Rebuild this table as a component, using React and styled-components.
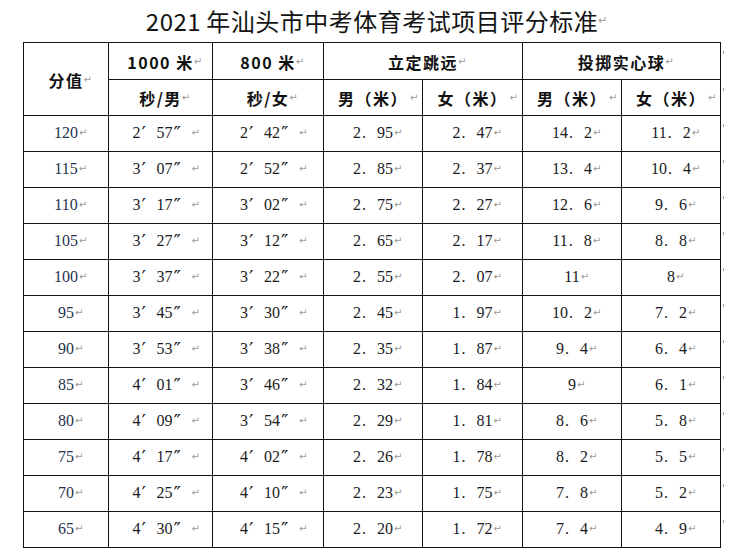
import React from "react";
import styled, { createGlobalStyle } from "styled-components";

const Global = createGlobalStyle`
  html, body { margin: 0; padding: 0; background: #fff; }
  body { font-family: "Noto Sans CJK SC", "Noto Sans", sans-serif; color: #111; }
`;

const Page = styled.div`
  width: 744px;
  height: 548px;
  overflow: hidden;
  display: flex;
  flex-direction: column;
`;

const Title = styled.h1`
  margin: 0;
  height: 44px;
  display: flex;
  align-items: center;
  justify-content: center;
  font-family: "Noto Sans CJK SC", sans-serif;
  font-weight: 400;
  font-size: 24px;
  line-height: 24px;
  letter-spacing: 0.5px;
  color: #141414;
  white-space: nowrap;
`;

const Year = styled.span`
  margin-right: 5px;
`;

const Mark = styled.span`
  display: inline-block;
  width: ${(p) => p.$w || 9}px;
  margin-left: ${(p) => p.$gap || 0}px;
  margin-right: ${(p) => -((p.$w || 9) + (p.$gap || 0))}px;
  font-family: "DejaVu Sans", sans-serif;
  font-weight: 400;
  font-size: ${(p) => p.$size || 10}px;
  letter-spacing: 0;
  color: #9a9a9a;
  text-align: left;
`;

const TableRow = styled.div`
  display: flex;
  padding-left: 23px;
`;

const Grid = styled.div`
  display: grid;
  grid-template-columns: 84px 103px 110px 98px 99px 98px 98px;
  grid-template-rows: 36px 35px;
  grid-auto-rows: 35px;
  gap: 1px;
  padding: 1px;
  background: #141414;
  flex: none;
`;

const HeadCell = styled.div`
  background: #fff;
  display: flex;
  align-items: center;
  justify-content: center;
  padding-top: ${(p) => (p.$low ? 1 : 0)}px;
  grid-column: ${(p) => p.$col || "auto"};
  grid-row: ${(p) => p.$row || "auto"};
  font-family: "Noto Sans CJK SC", sans-serif;
  font-weight: 700;
  font-size: 16px;
  letter-spacing: 1.5px;
  color: #111;
  white-space: nowrap;
`;

const Cell = styled.div`
  background: #fff;
  display: flex;
  align-items: center;
  justify-content: center;
  padding-bottom: 1px;
  font-family: "Liberation Serif", "Noto Sans CJK SC", serif;
  font-size: 16px;
  line-height: 16px;
  color: ${(p) => (p.$score ? "#26324f" : "#1a1a22")};
  white-space: nowrap;
`;

const Prime = styled.span`
  display: inline-block;
  width: 16px;
  padding-left: 1px;
  box-sizing: border-box;
  text-align: left;
  font-family: "DejaVu Sans", sans-serif;
  font-size: 20px;
  line-height: 16px;
  vertical-align: top;
  overflow: visible;
`;

const Dot = styled.span`
  display: inline-block;
  width: 16px;
  padding-left: 1px;
  box-sizing: border-box;
  text-align: left;
`;

const RowMarks = styled.div`
  display: flex;
  flex-direction: column;
  padding-top: 1px;
  gap: 1px;
`;

const RowMarkSlot = styled.div`
  height: ${(p) => p.$h}px;
  padding-left: 2px;
`;

const Tick = styled.div`
  width: 1px;
  height: 3px;
  margin-top: 8px;
  background: #a0a0a0;
`;

const rows = [
  ["120", ["2", "57"], ["2", "42"], "2.95", "2.47", "14.2", "11.2"],
  ["115", ["3", "07"], ["2", "52"], "2.85", "2.37", "13.4", "10.4"],
  ["110", ["3", "17"], ["3", "02"], "2.75", "2.27", "12.6", "9.6"],
  ["105", ["3", "27"], ["3", "12"], "2.65", "2.17", "11.8", "8.8"],
  ["100", ["3", "37"], ["3", "22"], "2.55", "2.07", "11", "8"],
  ["95", ["3", "45"], ["3", "30"], "2.45", "1.97", "10.2", "7.2"],
  ["90", ["3", "53"], ["3", "38"], "2.35", "1.87", "9.4", "6.4"],
  ["85", ["4", "01"], ["3", "46"], "2.32", "1.84", "9", "6.1"],
  ["80", ["4", "09"], ["3", "54"], "2.29", "1.81", "8.6", "5.8"],
  ["75", ["4", "17"], ["4", "02"], "2.26", "1.78", "8.2", "5.5"],
  ["70", ["4", "25"], ["4", "10"], "2.23", "1.75", "7.8", "5.2"],
  ["65", ["4", "30"], ["4", "15"], "2.20", "1.72", "7.4", "4.9"],
];

function Time({ value }) {
  return (
    <>
      {value[0]}
      <Prime>′</Prime>
      {value[1]}
      <Prime>″</Prime>
      <Mark $gap={3}>↵</Mark>
    </>
  );
}

function Num({ value }) {
  const [a, b] = value.split(".");
  return (
    <>
      {a}
      {b !== undefined && (
        <>
          <Dot>.</Dot>
          {b}
        </>
      )}
      <Mark $gap={1}>↵</Mark>
    </>
  );
}

export default function App() {
  const slotHeights = [36, 35, ...rows.map(() => 35)];
  return (
    <Page>
      <Global />
      <Title>
        <Year>2021</Year> 年汕头市中考体育考试项目评分标准
        <Mark $size={11} $w={10}>↵</Mark>
      </Title>
      <TableRow>
        <Grid>
          <HeadCell $row="1 / span 2" $col="1" $low>
            分值<Mark>↵</Mark>
          </HeadCell>
          <HeadCell $low>
            1000 米<Mark>↵</Mark>
          </HeadCell>
          <HeadCell $low>
            800 米<Mark>↵</Mark>
          </HeadCell>
          <HeadCell $col="4 / span 2" $low>
            立定跳远<Mark>↵</Mark>
          </HeadCell>
          <HeadCell $col="6 / span 2" $low>
            投掷实心球<Mark>↵</Mark>
          </HeadCell>
          <HeadCell>
            秒/男<Mark>↵</Mark>
          </HeadCell>
          <HeadCell>
            秒/女<Mark>↵</Mark>
          </HeadCell>
          <HeadCell>
            男（米）<Mark $gap={2}>↵</Mark>
          </HeadCell>
          <HeadCell>
            女（米）<Mark $gap={2}>↵</Mark>
          </HeadCell>
          <HeadCell>
            男（米）<Mark $gap={2}>↵</Mark>
          </HeadCell>
          <HeadCell>
            女（米）<Mark $gap={2}>↵</Mark>
          </HeadCell>
          {rows.map((r) => (
            <React.Fragment key={r[0]}>
              <Cell $score>
                <Num value={r[0]} />
              </Cell>
              <Cell>
                <Time value={r[1]} />
              </Cell>
              <Cell>
                <Time value={r[2]} />
              </Cell>
              {r.slice(3).map((v, i) => (
                <Cell key={i}>
                  <Num value={v} />
                </Cell>
              ))}
            </React.Fragment>
          ))}
        </Grid>
        <RowMarks>
          {slotHeights.map((h, i) => (
            <RowMarkSlot key={i} $h={h}>
              <Tick />
            </RowMarkSlot>
          ))}
        </RowMarks>
      </TableRow>
    </Page>
  );
}
